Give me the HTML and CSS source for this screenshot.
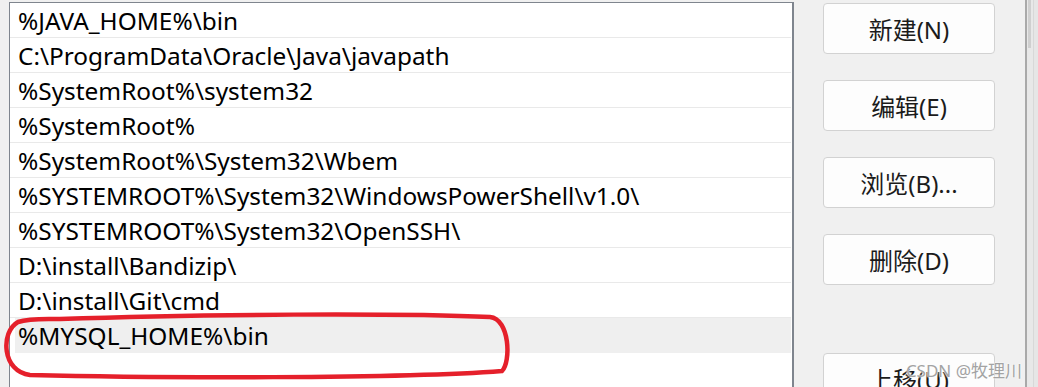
FILE: index.html
```html
<!DOCTYPE html>
<html lang="zh-CN">
<head>
  <meta charset="UTF-8" />
  <title>编辑环境变量</title>
  <link rel="stylesheet" href="styles.css">
</head>
<body>

  <div class="dialog">
    <div class="path-list">
      <div class="path-row">%JAVA_HOME%\bin</div>
      <div class="path-row">C:\ProgramData\Oracle\Java\javapath</div>
      <div class="path-row">%SystemRoot%\system32</div>
      <div class="path-row">%SystemRoot%</div>
      <div class="path-row">%SystemRoot%\System32\Wbem</div>
      <div class="path-row">%SYSTEMROOT%\System32\WindowsPowerShell\v1.0\</div>
      <div class="path-row">%SYSTEMROOT%\System32\OpenSSH\</div>
      <div class="path-row">D:\install\Bandizip\</div>
      <div class="path-row">D:\install\Git\cmd</div>
      <div class="path-row selected">%MYSQL_HOME%\bin</div>
    </div>

    <div class="actions">
      <button class="btn">新建(N)</button>
      <button class="btn">编辑(E)</button>
      <button class="btn">浏览(B)...</button>
      <button class="btn">删除(D)</button>
      <button class="btn group-start">上移(U)</button>
    </div>

    <div class="side-strip">
      <div class="strip-track"><div class="strip-thumb"></div></div>
      <div class="strip-pane"></div>
    </div>
  </div>

  <!-- red hand-drawn highlight -->
  <svg class="highlight" width="520" height="70" viewBox="0 312 520 70">
    <path d="M60 319 C 200 314, 400 313, 490 317 C 510 319, 511 362, 502 371 C 400 379, 150 378, 30 375 C 2 372, 0 332, 18 322 C 30 318, 45 319, 60 319 Z"
          fill="none" stroke="#e5202b" stroke-width="4.5" />
  </svg>

  <div class="watermark">CSDN @牧理川</div>

</body>
</html>
```

FILE: styles.css
```css
body {
  margin: 0;
  height: 387px;
  overflow: hidden;
  background-color: #f0f0f0;
  font-family: 'Noto Sans', 'Noto Sans CJK SC', sans-serif;
  color: #000;
}

.dialog {
  display: flex;
  height: 100%;
}

.path-list {
  margin: 2px 0 0 9px;
  width: 782px;
  flex-shrink: 0;
  background-color: #fff;
  border: 1px solid #7f858e;
  border-right-width: 2px;
  border-bottom: none;
}

.path-row {
  height: 34px;
  line-height: 36px;
  padding-left: 8px;
  font-size: 24.4px;
  border-bottom: 1px solid #e9e9e9;
  margin-right: 1px;
  white-space: nowrap;
}

.path-row.selected {
  background-color: #efefef;
  margin-left: 5px;
  padding-left: 3px;
  border-bottom-color: transparent;
}

.actions {
  display: flex;
  flex-direction: column;
  gap: 26px;
  margin-left: 29px;
  padding-top: 3px;
  width: 172px;
  flex-shrink: 0;
}

.btn {
  flex-shrink: 0;
  height: 51px;
  background-color: #fdfdfd;
  border: 1px solid #d2d2d2;
  border-radius: 4px;
  font-family: inherit;
  font-size: 24px;
  color: #1b1b1b;
  padding: 0;
}

.btn.group-start {
  margin-top: 42px;
}

.side-strip {
  margin-left: 30px;
  flex: 1;
  display: flex;
  border-left: 2px solid #a9a9a9;
}

.strip-track {
  width: 5px;
  background-color: #e8e8e8;
  padding-left: 1px;
}

.strip-thumb {
  width: 3px;
  height: 48px;
  background-color: #cfcfcf;
}

.strip-pane {
  flex: 1;
  background-color: #e6e6e6;
  border-left: 1px solid #d8d8d8;
}

.highlight {
  position: absolute;
  left: 0;
  top: 312px;
}

.watermark {
  position: absolute;
  right: 16px;
  bottom: 5px;
  font-size: 17px;
  color: #a3a3a3;
  text-shadow: 0 0 2px #fff, 0 0 2px #fff;
}
```
